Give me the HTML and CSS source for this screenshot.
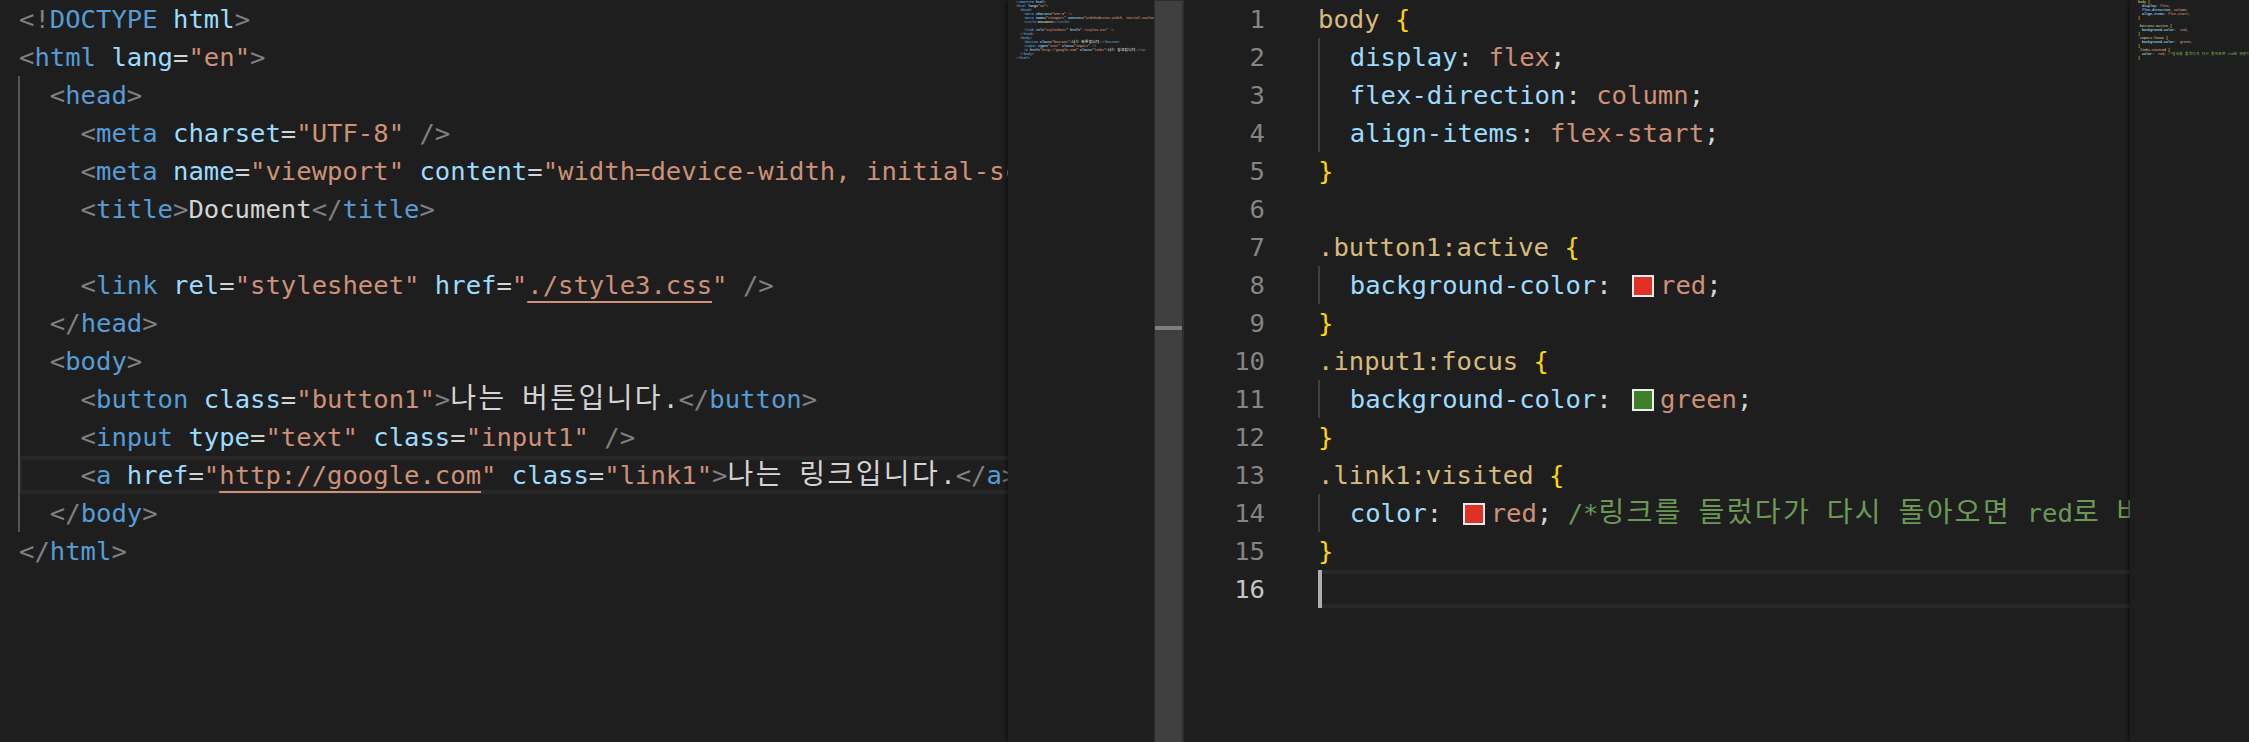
FILE: index.html
```html
<!DOCTYPE html>
<html lang="ko">
<head>
<meta charset="UTF-8">
<title>Editor</title>
<link rel="stylesheet" href="styles.css">
</head>
<body>
<main class="editor">
  <section class="pane pane-html">
    <div class="code">
      <div class="line"><span class="p">&lt;!</span><span class="t">DOCTYPE</span> <span class="a">html</span><span class="p">&gt;</span></div>
      <div class="line"><span class="p">&lt;</span><span class="t">html</span> <span class="a">lang</span><span class="x">=</span><span class="s">"en"</span><span class="p">&gt;</span></div>
      <div class="block strong">
        <div class="line">  <span class="p">&lt;</span><span class="t">head</span><span class="p">&gt;</span></div>
        <div class="line">    <span class="p">&lt;</span><span class="t">meta</span> <span class="a">charset</span><span class="x">=</span><span class="s">"UTF-8"</span> <span class="p">/&gt;</span></div>
        <div class="line">    <span class="p">&lt;</span><span class="t">meta</span> <span class="a">name</span><span class="x">=</span><span class="s">"viewport"</span> <span class="a">content</span><span class="x">=</span><span class="s">"width=device-width, initial-scale=1.0"</span> <span class="p">/&gt;</span></div>
        <div class="line">    <span class="p">&lt;</span><span class="t">title</span><span class="p">&gt;</span><span class="x">Document</span><span class="p">&lt;/</span><span class="t">title</span><span class="p">&gt;</span></div>
        <div class="line"> </div>
        <div class="line">    <span class="p">&lt;</span><span class="t">link</span> <span class="a">rel</span><span class="x">=</span><span class="s">"stylesheet"</span> <span class="a">href</span><span class="x">=</span><span class="s">"<span class="u">./style3.css</span>"</span> <span class="p">/&gt;</span></div>
        <div class="line">  <span class="p">&lt;/</span><span class="t">head</span><span class="p">&gt;</span></div>
        <div class="line">  <span class="p">&lt;</span><span class="t">body</span><span class="p">&gt;</span></div>
        <div class="line">    <span class="p">&lt;</span><span class="t">button</span> <span class="a">class</span><span class="x">=</span><span class="s">"button1"</span><span class="p">&gt;</span><span class="x"><span class="ko">나는</span> <span class="ko">버튼입니다</span>.</span><span class="p">&lt;/</span><span class="t">button</span><span class="p">&gt;</span></div>
        <div class="line">    <span class="p">&lt;</span><span class="t">input</span> <span class="a">type</span><span class="x">=</span><span class="s">"text"</span> <span class="a">class</span><span class="x">=</span><span class="s">"input1"</span> <span class="p">/&gt;</span></div>
        <div class="line current">    <span class="p">&lt;</span><span class="t">a</span> <span class="a">href</span><span class="x">=</span><span class="s">"<span class="u">http://google.com</span>"</span> <span class="a">class</span><span class="x">=</span><span class="s">"link1"</span><span class="p">&gt;</span><span class="x"><span class="ko">나는</span> <span class="ko">링크입니다</span>.</span><span class="p">&lt;/</span><span class="t">a</span><span class="p">&gt;</span></div>
        <div class="line">  <span class="p">&lt;/</span><span class="t">body</span><span class="p">&gt;</span></div>
      </div>
      <div class="line"><span class="p">&lt;/</span><span class="t">html</span><span class="p">&gt;</span></div>
    </div>
    <div class="minimap">
      <div class="mini-line"><span class="p">&lt;!</span><span class="t">DOCTYPE</span> <span class="a">html</span><span class="p">&gt;</span></div>
      <div class="mini-line"><span class="p">&lt;</span><span class="t">html</span> <span class="a">lang</span><span class="x">=</span><span class="s">"en"</span><span class="p">&gt;</span></div>
      <div class="mini-line">  <span class="p">&lt;</span><span class="t">head</span><span class="p">&gt;</span></div>
      <div class="mini-line">    <span class="p">&lt;</span><span class="t">meta</span> <span class="a">charset</span><span class="x">=</span><span class="s">"UTF-8"</span> <span class="p">/&gt;</span></div>
      <div class="mini-line">    <span class="p">&lt;</span><span class="t">meta</span> <span class="a">name</span><span class="x">=</span><span class="s">"viewport"</span> <span class="a">content</span><span class="x">=</span><span class="s">"width=device-width, initial-scale=1.0"</span> <span class="p">/&gt;</span></div>
      <div class="mini-line">    <span class="p">&lt;</span><span class="t">title</span><span class="p">&gt;</span><span class="x">Document</span><span class="p">&lt;/</span><span class="t">title</span><span class="p">&gt;</span></div>
      <div class="mini-line"> </div>
      <div class="mini-line">    <span class="p">&lt;</span><span class="t">link</span> <span class="a">rel</span><span class="x">=</span><span class="s">"stylesheet"</span> <span class="a">href</span><span class="x">=</span><span class="s">"./style3.css"</span> <span class="p">/&gt;</span></div>
      <div class="mini-line">  <span class="p">&lt;/</span><span class="t">head</span><span class="p">&gt;</span></div>
      <div class="mini-line">  <span class="p">&lt;</span><span class="t">body</span><span class="p">&gt;</span></div>
      <div class="mini-line">    <span class="p">&lt;</span><span class="t">button</span> <span class="a">class</span><span class="x">=</span><span class="s">"button1"</span><span class="p">&gt;</span><span class="x"><span class="ko">나는</span> <span class="ko">버튼입니다</span>.</span><span class="p">&lt;/</span><span class="t">button</span><span class="p">&gt;</span></div>
      <div class="mini-line">    <span class="p">&lt;</span><span class="t">input</span> <span class="a">type</span><span class="x">=</span><span class="s">"text"</span> <span class="a">class</span><span class="x">=</span><span class="s">"input1"</span> <span class="p">/&gt;</span></div>
      <div class="mini-line">    <span class="p">&lt;</span><span class="t">a</span> <span class="a">href</span><span class="x">=</span><span class="s">"http://google.com"</span> <span class="a">class</span><span class="x">=</span><span class="s">"link1"</span><span class="p">&gt;</span><span class="x"><span class="ko">나는</span> <span class="ko">링크입니다</span>.</span><span class="p">&lt;/</span><span class="t">a</span><span class="p">&gt;</span></div>
      <div class="mini-line">  <span class="p">&lt;/</span><span class="t">body</span><span class="p">&gt;</span></div>
      <div class="mini-line"><span class="p">&lt;/</span><span class="t">html</span><span class="p">&gt;</span></div>
    </div>
    <div class="scrollbar"><div class="thumb"></div></div>
  </section>

  <section class="pane pane-css">
    <div class="gutter">
      <div class="line">1</div><div class="line">2</div><div class="line">3</div><div class="line">4</div>
      <div class="line">5</div><div class="line">6</div><div class="line">7</div><div class="line">8</div>
      <div class="line">9</div><div class="line">10</div><div class="line">11</div><div class="line">12</div>
      <div class="line">13</div><div class="line">14</div><div class="line">15</div><div class="line active-no">16</div>
    </div>
    <div class="code">
      <div class="line"><span class="sel">body</span> <span class="b">{</span></div>
      <div class="block">
        <div class="line">  <span class="a">display</span><span class="x">:</span> <span class="s">flex</span><span class="x">;</span></div>
        <div class="line">  <span class="a">flex-direction</span><span class="x">:</span> <span class="s">column</span><span class="x">;</span></div>
        <div class="line">  <span class="a">align-items</span><span class="x">:</span> <span class="s">flex-start</span><span class="x">;</span></div>
      </div>
      <div class="line"><span class="b">}</span></div>
      <div class="line"> </div>
      <div class="line"><span class="sel">.button1:active</span> <span class="b">{</span></div>
      <div class="block">
        <div class="line">  <span class="a">background-color</span><span class="x">:</span> <span class="swatch red"></span><span class="s">red</span><span class="x">;</span></div>
      </div>
      <div class="line"><span class="b">}</span></div>
      <div class="line"><span class="sel">.input1:focus</span> <span class="b">{</span></div>
      <div class="block">
        <div class="line">  <span class="a">background-color</span><span class="x">:</span> <span class="swatch green"></span><span class="s">green</span><span class="x">;</span></div>
      </div>
      <div class="line"><span class="b">}</span></div>
      <div class="line"><span class="sel">.link1:visited</span> <span class="b">{</span></div>
      <div class="block">
        <div class="line">  <span class="a">color</span><span class="x">:</span> <span class="swatch red"></span><span class="s">red</span><span class="x">;</span> <span class="c">/*<span class="ko">링크를</span> <span class="ko">들렀다가</span> <span class="ko">다시</span> <span class="ko">돌아오면</span> red<span class="ko">로</span> <span class="ko">바뀐다</span> */</span></div>
      </div>
      <div class="line"><span class="b">}</span></div>
      <div class="line current-css"><span class="cursor"></span></div>
    </div>
    <div class="minimap">
      <div class="mini-line"><span class="sel">body</span> <span class="b">{</span></div>
      <div class="mini-line">  <span class="a">display</span><span class="x">:</span> <span class="s">flex</span><span class="x">;</span></div>
      <div class="mini-line">  <span class="a">flex-direction</span><span class="x">:</span> <span class="s">column</span><span class="x">;</span></div>
      <div class="mini-line">  <span class="a">align-items</span><span class="x">:</span> <span class="s">flex-start</span><span class="x">;</span></div>
      <div class="mini-line"><span class="b">}</span></div>
      <div class="mini-line"> </div>
      <div class="mini-line"><span class="sel">.button1:active</span> <span class="b">{</span></div>
      <div class="mini-line">  <span class="a">background-color</span><span class="x">:</span>  <span class="s">red</span><span class="x">;</span></div>
      <div class="mini-line"><span class="b">}</span></div>
      <div class="mini-line"><span class="sel">.input1:focus</span> <span class="b">{</span></div>
      <div class="mini-line">  <span class="a">background-color</span><span class="x">:</span>  <span class="s">green</span><span class="x">;</span></div>
      <div class="mini-line"><span class="b">}</span></div>
      <div class="mini-line"><span class="sel">.link1:visited</span> <span class="b">{</span></div>
      <div class="mini-line">  <span class="a">color</span><span class="x">:</span>  <span class="s">red</span><span class="x">;</span> <span class="c">/*<span class="ko">링크를</span> <span class="ko">들렀다가</span> <span class="ko">다시</span> <span class="ko">돌아오면</span> red<span class="ko">로</span> <span class="ko">바뀐다</span> */</span></div>
      <div class="mini-line"><span class="b">}</span></div>
    </div>
  </section>
</main>
</body>
</html>
```
FILE: styles.css
```css
* { box-sizing: border-box; }
html, body { margin: 0; height: 100%; background: #1e1e1e; }
body { overflow: hidden; }

.editor {
  display: flex;
  width: 2249px;
  height: 742px;
  background: #1e1e1e;
  color: #d4d4d4;
  font-family: "DejaVu Sans Mono", "Noto Sans CJK KR", monospace;
  font-size: 25.58px;
}

.pane { display: flex; height: 100%; overflow: hidden; }
.pane-html { width: 1184px; flex: none; }
.pane-css { flex: 1; min-width: 0; }

.code { flex: 1; min-width: 0; overflow: hidden; }
.pane-html .code { padding-left: 18px; }
.pane-css .code { padding-left: 53px; }

.line { height: 38px; line-height: 38px; white-space: pre; }
.pane-html .code > .line { padding-left: 1px; }

.block { border-left: 2px solid #404040; }
.block.strong { border-left-color: #555; }
.pane-html .block .line { text-indent: -1px; }
.pane-css .block .line { text-indent: -1px; }

.current { box-shadow: inset 2px 0 #282828, inset 0 4px #282828, inset 0 -4px #282828; }
.current-css { position: relative; box-shadow: inset 0 4px #282828, inset 0 -4px #282828; }
.cursor { position: absolute; left: 0; top: 0; width: 4px; height: 38px; background: #aeafad; }

.gutter {
  flex: none;
  width: 81px;
  text-align: right;
  color: #858585;
}
.gutter .active-no { color: #c6c6c6; }

.minimap {
  flex: none;
  position: relative;
  overflow: hidden;
  padding-left: 8px;
  font-family: "Liberation Mono", "Noto Sans CJK KR", monospace;
  font-size: 3.34px;
  font-weight: 700;
  background: #1e1e1e;
  box-shadow: -3px 0 4px -1px rgba(0, 0, 0, .45);
}
.pane-html .minimap { width: 146px; }
.pane-css .minimap { width: 119px; }
.mini-line { height: 4px; line-height: 4px; white-space: pre; opacity: .9; }

.scrollbar {
  flex: none;
  width: 30px;
  height: 100%;
  padding-top: 326px;
  background: #3f3f3f;
  border-left: 1px solid #2e2e2e;
  border-right: 2px solid #2e2e2e;
  border-top: 1px solid #2e2e2e;
}
.thumb { height: 4px; background: #7e7e7e; margin-top: -1px; }

.p { color: #808080; }
.t { color: #569cd6; }
.a { color: #9cdcfe; }
.s { color: #ce9178; }
.x { color: #d4d4d4; }
.sel { color: #d7ba7d; }
.b { color: #ffd700; }
.c { color: #6a9955; }
.u { text-decoration: underline; text-decoration-thickness: 2px; text-underline-offset: 7px; }

.ko { font-size: 1.095em; letter-spacing: .087em; }

.swatch {
  display: inline-block;
  width: 22px;
  height: 22px;
  margin: 0 6px 0 5px;
  vertical-align: -3px;
  border: 2px solid #eeeeee;
}
.swatch.red { background: #e03224; }
.swatch.green { background: #3f7f25; }
```
